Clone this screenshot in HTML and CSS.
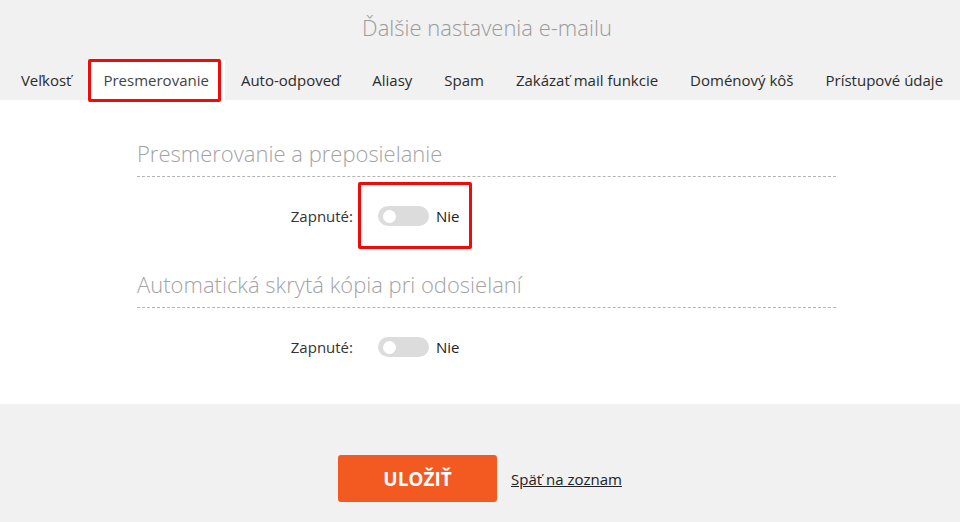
FILE: index.html
```html
<!DOCTYPE html>
<html lang="sk">
<head>
<meta charset="utf-8">
<title>Ďalšie nastavenia e-mailu</title>
<link rel="stylesheet" href="styles.css">
</head>
<body>
<header class="top">
  <h1 class="title">Ďalšie nastavenia e-mailu</h1>
  <nav class="tabs">
    <a class="tab">Veľkosť</a>
    <a class="tab active">Presmerovanie<span class="mark mark-tab"></span></a>
    <a class="tab">Auto-odpoveď</a>
    <a class="tab">Aliasy</a>
    <a class="tab">Spam</a>
    <a class="tab">Zakázať mail funkcie</a>
    <a class="tab">Doménový kôš</a>
    <a class="tab">Prístupové údaje</a>
  </nav>
</header>
<main class="content">
  <section class="block">
    <h2 class="block-title">Presmerovanie a preposielanie</h2>
    <div class="row">
      <span class="label">Zapnuté:</span>
      <span class="control">
        <span class="switch"><span class="knob"></span></span>
        <span class="state">Nie</span>
        <span class="mark mark-switch"></span>
      </span>
    </div>
  </section>
  <section class="block">
    <h2 class="block-title">Automatická skrytá kópia pri odosielaní</h2>
    <div class="row">
      <span class="label">Zapnuté:</span>
      <span class="control">
        <span class="switch"><span class="knob"></span></span>
        <span class="state">Nie</span>
      </span>
    </div>
  </section>
</main>
<footer class="actions">
  <button class="save">ULOŽIŤ</button>
  <a class="back" href="#">Späť na zoznam</a>
</footer>
</body>
</html>
```
FILE: styles.css
```css
* { box-sizing: border-box; }
html, body {
  margin: 0;
  padding: 0;
  background: #f1f1f1;
  font-family: "Open Sans", "Liberation Sans", sans-serif;
  color: #333;
}
.top {
  background: #f1f1f1;
}
.title {
  margin: 0;
  padding-top: 12px;
  padding-left: 14px;
  height: 60px;
  text-align: center;
  font-weight: 300;
  font-size: 22px;
  line-height: 30px;
  color: #9a9a9a;
}
.tabs {
  display: flex;
  justify-content: center;
  height: 40px;
  padding-left: 4px;
}
.tab {
  position: relative;
  display: flex;
  align-items: center;
  padding: 0 16px;
  font-size: 15px;
  color: #2b2b2b;
  white-space: nowrap;
  cursor: pointer;
}
.tab.active {
  background: #fff;
  color: #444;
}
.mark {
  position: absolute;
  border: 3px solid #f00a0a;
  border-radius: 2px;
  pointer-events: none;
}
.mark-tab {
  left: 1px;
  right: 4px;
  top: -1px;
  bottom: -2px;
}
.content {
  background: #fff;
  padding: 38px 0 47px;
}
.block {
  width: 699px;
  margin-left: 137px;
}
.block + .block {
  margin-top: 43px;
}
.block-title {
  margin: 0;
  padding-bottom: 8px;
  border-bottom: 1px dashed #b5b5b5;
  font-weight: 300;
  font-size: 22px;
  line-height: 30px;
  color: #a3a3a3;
}
.row {
  display: flex;
  align-items: center;
  height: 20px;
  margin-top: 29px;
  font-size: 15px;
}
.label {
  width: 216px;
  text-align: right;
  color: #333;
}
.control {
  position: relative;
  display: flex;
  align-items: center;
  margin-left: 25px;
}
.switch {
  display: flex;
  align-items: center;
  width: 51px;
  height: 20px;
  border-radius: 10px;
  background: #dcdcdc;
  padding-left: 5px;
}
.knob {
  width: 13px;
  height: 13px;
  border-radius: 50%;
  background: #fff;
}
.state {
  margin-left: 7px;
  color: #222;
}
.mark-switch {
  left: -20px;
  right: -12px;
  top: -24px;
  bottom: -23px;
}
.actions {
  display: flex;
  justify-content: center;
  align-items: center;
  padding-top: 51px;
  gap: 14px;
}
.save {
  width: 159px;
  height: 47px;
  border: 0;
  border-radius: 3px;
  background: #f25a22;
  color: #fff;
  font-family: "Open Sans", "Liberation Sans", sans-serif;
  font-weight: 700;
  font-size: 19px;
  cursor: pointer;
}
.back {
  font-size: 15px;
  color: #222;
  text-decoration: underline;
}
```
